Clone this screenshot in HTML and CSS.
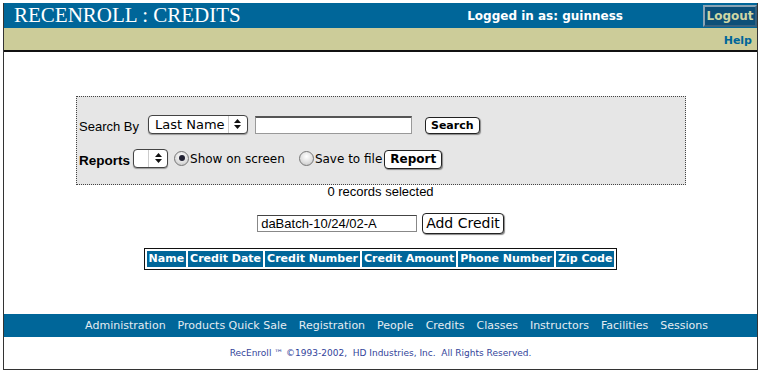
FILE: index.html
```html
<!DOCTYPE html>
<html>
<head>
    <title>RecEnroll : Credits</title>
    <link rel="stylesheet" href="styles.css">
</head>
<body>
    <div class="frame">
        <div class="topbar">
            <div class="title">RECENROLL : CREDITS</div>
            <div class="who">Logged in as: guinness</div>
            <div class="logout">Logout</div>
        </div>
        <div class="helpbar">
            <a class="help">Help</a>
        </div>

        <div class="main">
            <div class="searchbox">
                <div class="row">
                    <span class="label">Search By</span>
                    <span class="select wide"><span class="sel-text">Last Name</span><span class="sel-arrow"><svg width="7" height="10" viewBox="0 0 7 10"><path d="M3.5 0L7 4H0z M3.5 10L7 6H0z" fill="#111"/></svg></span></span>
                    <span class="textbox"></span>
                    <span class="btn bold">Search</span>
                </div>
                <div class="row second">
                    <span class="label strong">Reports</span>
                    <span class="select narrow"><span class="sel-text"></span><span class="sel-arrow"><svg width="7" height="10" viewBox="0 0 7 10"><path d="M3.5 0L7 4H0z M3.5 10L7 6H0z" fill="#111"/></svg></span></span>
                    <span class="radio on"></span><span class="radio-label">Show on screen</span>
                    <span class="radio off"></span><span class="radio-label">Save to file</span>
                    <span class="btn bold wider">Report</span>
                </div>
            </div>

            <p class="count">0 records selected</p>

            <div class="batch">
                <span class="batchbox">daBatch-10/24/02-A</span>
                <span class="btn big">Add Credit</span>
            </div>

            <table class="results">
                <tr>
                    <th>Name</th>
                    <th>Credit Date</th>
                    <th>Credit Number</th>
                    <th>Credit Amount</th>
                    <th>Phone Number</th>
                    <th>Zip Code</th>
                </tr>
            </table>
        </div>

        <div class="nav">
            <a>Administration</a>
            <a>Products Quick Sale</a>
            <a>Registration</a>
            <a>People</a>
            <a>Credits</a>
            <a>Classes</a>
            <a>Instructors</a>
            <a>Facilities</a>
            <a>Sessions</a>
        </div>
        <div class="copy">RecEnroll &trade; &copy;1993-2002, &nbsp;HD Industries, Inc. &nbsp;All Rights Reserved.</div>
    </div>
</body>
</html>
```

FILE: styles.css
```css
body {
    margin: 0;
    background-color: #fff;
    font-family: "Liberation Sans", Arial, sans-serif;
    font-size: 13px;
    color: #000;
}

.frame {
    width: 753px;
    margin: 3px 0 0 3px;
    border-left: 1px solid #333;
    border-right: 1px solid #333;
    border-bottom: 1px solid #333;
}

.topbar {
    height: 25px;
    background-color: #006699;
    display: flex;
    align-items: center;
    color: #fff;
}

.title {
    flex: 1;
    padding-left: 10px;
    font-family: "Liberation Serif", "Times New Roman", serif;
    font-size: 21px;
    line-height: 25px;
}

.who {
    font-family: "DejaVu Sans", Verdana, sans-serif;
    font-weight: bold;
    font-size: 12px;
    margin-right: 80px;
}

.logout {
    width: 50px;
    height: 18px;
    background-color: #0d4f78;
    border: 2px solid #35607e;
    border-left-color: #8aa3b4;
    border-top-color: #8aa3b4;
    color: #cfd6a4;
    font-family: "DejaVu Sans", Verdana, sans-serif;
    font-weight: bold;
    font-size: 12px;
    line-height: 18px;
    text-align: center;
}

.helpbar {
    height: 22px;
    background-color: #cccc99;
    border-bottom: 2px solid #111;
    display: flex;
    justify-content: flex-end;
    align-items: center;
}

.help {
    color: #006699;
    font-family: "DejaVu Sans", Verdana, sans-serif;
    font-weight: bold;
    font-size: 11px;
    margin-right: 5px;
    padding-top: 2px;
}

.main {
    height: 262px;
    display: flex;
    flex-direction: column;
    align-items: center;
}

.searchbox {
    width: 604px;
    height: 70px;
    margin-top: 44px;
    margin-left: 1px;
    padding: 17px 2px 0 2px;
    background-color: #e6e6e6;
    border: 1px dotted #444;
}

.row {
    display: flex;
    align-items: center;
    height: 20px;
}

.row.second {
    margin-top: 14px;
}

.label {
    margin-right: 9px;
    padding-top: 4px;
}

.label.strong {
    font-weight: bold;
    font-size: 13.5px;
    margin-right: 3px;
}

.select {
    display: inline-flex;
    height: 17px;
    background-color: #fff;
    border: 1px solid #444;
    border-radius: 4px;
    box-shadow: 0 1px 1px #999;
    font-family: "DejaVu Sans", Verdana, sans-serif;
    font-size: 13px;
    line-height: 17px;
}

.select.wide {
    width: 98px;
    margin-right: 7px;
}

.select.narrow {
    width: 33px;
    margin-right: 6px;
}

.sel-text {
    flex: 1;
    padding-left: 6px;
    border-right: 1px solid #ccc;
}

.sel-arrow {
    width: 18px;
    display: flex;
    align-items: center;
    justify-content: center;
}

.textbox {
    width: 155px;
    height: 15px;
    background-color: #fff;
    border: 1px solid #999;
    border-top: 2px solid #555;
    margin-right: 13px;
    margin-top: 2px;
}

.btn {
    display: inline-block;
    background-color: #fff;
    border: 1px solid #222;
    border-radius: 4px;
    box-shadow: 1px 1px 1px #888;
    font-family: "DejaVu Sans", Verdana, sans-serif;
    font-size: 11px;
    line-height: 15px;
    padding: 0 5px;
}

.btn.bold {
    font-weight: bold;
}

.btn.wider {
    padding: 1px 5px;
    font-size: 12px;
    margin-left: 2px;
}

.row .btn {
    margin-top: 3px;
}

.radio {
    width: 15px;
    height: 15px;
    border-radius: 50%;
    border: 1px solid #777;
    background: radial-gradient(circle at 50% 35%, #fff 0, #ddd 60%, #bbb 100%);
    box-sizing: border-box;
    margin-right: 1px;
    position: relative;
}

.radio.on::after {
    content: "";
    position: absolute;
    left: 3.5px;
    top: 3.5px;
    width: 6px;
    height: 6px;
    border-radius: 50%;
    background-color: #223;
}

.radio.off {
    margin-left: 14px;
}

.radio-label {
    font-family: "DejaVu Sans", Verdana, sans-serif;
    font-size: 12px;
    padding-top: 2px;
}

.count {
    margin: -1px 0 0 0;
    line-height: 16px;
}

.batch {
    display: flex;
    align-items: center;
    margin-top: 12px;
    height: 22px;
}

.batchbox {
    width: 155px;
    height: 15px;
    padding-left: 3px;
    border: 1px solid #888;
    border-top-color: #444;
    margin-right: 5px;
    line-height: 15px;
    font-size: 13px;
}

.btn.big {
    font-size: 14px;
    line-height: 19px;
    padding: 0 3px;
}

.results {
    margin-top: 14px;
    border: 1px solid #111;
    border-spacing: 2px;
}

.results th {
    background-color: #006699;
    color: #fff;
    font-family: "DejaVu Sans", Verdana, sans-serif;
    font-size: 11px;
    padding: 1px 2px;
    line-height: 14px;
}

.nav {
    height: 23px;
    background-color: #006699;
    display: flex;
    justify-content: center;
    align-items: center;
    gap: 12px;
    padding-left: 32px;
}

.nav a {
    color: #e4ecf2;
    font-family: "DejaVu Sans", Verdana, sans-serif;
    font-size: 11px;
}

.copy {
    height: 32px;
    line-height: 32px;
    text-align: center;
    color: #33449a;
    font-family: "DejaVu Sans", Verdana, sans-serif;
    font-size: 9px;
}
```
